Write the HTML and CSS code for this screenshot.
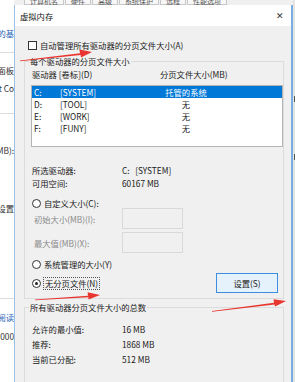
FILE: index.html
```html
<!DOCTYPE html>
<html lang="zh-CN">
<head>
    <meta charset="UTF-8">
    <title>虚拟内存</title>
    <link rel="stylesheet" href="styles.css">
</head>
<body>
<div class="page">

    <div class="behind">
        <div class="peek blue" style="margin-top: 28px;">内容的基</div>
        <div class="hr" style="margin-top: 14px;"></div>
        <div class="peek" style="margin-top: 12px;">面板</div>
        <div class="peek" style="margin-top: 8px;">Not Co</div>
        <div class="hr" style="margin-top: 20px;"></div>
        <div class="peek" style="margin-top: 31px;">(MB):</div>
        <div class="peek" style="margin-top: 48px;">级设置</div>
        <div class="hr" style="margin-top: 85px;"></div>
        <div class="peek blue" style="margin-top: 13px;">阅读</div>
        <div class="peek" style="margin-top: 9px;">0000</div>
    </div>

    <div class="middle">
        <div class="tabs">
            <span>计算机名</span><span>硬件</span><span>高级</span><span>系统保护</span><span>远程</span><span>性能选项</span>
        </div>

        <div class="dialog">
            <div class="titlebar">
                <span>虚拟内存</span>
                <span class="close">✕</span>
            </div>

            <div class="content">
                <label class="check-row">
                    <span class="checkbox"></span>
                    自动管理所有驱动器的分页文件大小(A)
                </label>

                <fieldset class="group">
                    <legend>每个驱动器的分页文件大小</legend>

                    <div class="list-head">
                        <span class="head-drive">驱动器 [卷标](D)</span>
                        <span>分页文件大小(MB)</span>
                    </div>

                    <div class="listbox">
                        <div class="list-row selected">
                            <span class="col-letter">C:</span>
                            <span class="col-label">[SYSTEM]</span>
                            <span class="col-size">托管的系统</span>
                        </div>
                        <div class="list-row">
                            <span class="col-letter">D:</span>
                            <span class="col-label">[TOOL]</span>
                            <span class="col-size">无</span>
                        </div>
                        <div class="list-row">
                            <span class="col-letter">E:</span>
                            <span class="col-label">[WORK]</span>
                            <span class="col-size">无</span>
                        </div>
                        <div class="list-row">
                            <span class="col-letter">F:</span>
                            <span class="col-label">[FUNY]</span>
                            <span class="col-size">无</span>
                        </div>
                    </div>

                    <div class="info">
                        <div class="info-row"><span class="info-key">所选驱动器:</span><span>C:&nbsp;&nbsp;&nbsp;[SYSTEM]</span></div>
                        <div class="info-row"><span class="info-key">可用空间:</span><span>60167 MB</span></div>
                    </div>

                    <div class="radio-row first">
                        <span class="radio"></span>自定义大小(C):
                    </div>
                    <div class="size-row">
                        <span class="size-key">初始大小(MB)(I):</span>
                        <span class="size-box"></span>
                    </div>
                    <div class="size-row second">
                        <span class="size-key">最大值(MB)(X):</span>
                        <span class="size-box"></span>
                    </div>
                    <div class="radio-row system">
                        <span class="radio"></span>系统管理的大小(Y)
                    </div>
                    <div class="last-row">
                        <div class="radio-row">
                            <span class="radio checked"></span><span class="focus">无分页文件(N)</span>
                        </div>
                        <button class="set-btn">设置(S)</button>
                    </div>
                </fieldset>

                <fieldset class="group total">
                    <legend>所有驱动器分页文件大小的总数</legend>
                    <div class="total-row"><span class="info-key">允许的最小值:</span><span>16 MB</span></div>
                    <div class="total-row"><span class="info-key">推荐:</span><span>1868 MB</span></div>
                    <div class="total-row"><span class="info-key">当前已分配:</span><span>512 MB</span></div>
                </fieldset>
            </div>
        </div>
    </div>

    <div class="edge">
        <span class="edge-mark" style="margin-top: 96px;"></span>
        <span class="edge-mark" style="margin-top: 52px;"></span>
    </div>

    <!-- red annotation arrows drawn over the screenshot -->
    <svg class="arrows" width="295" height="382" viewBox="0 0 295 382">
        <polygon fill="#e8352f" points="20,60.5 80,53.2 79.5,49.5 92,52 81,57.6 80.6,55 20,61.2"/>
        <polygon fill="#e8352f" points="35,299.5 88,295.8 87.6,292.3 100,295 88.6,299.4 88.3,297.2 35,300.2"/>
        <polygon fill="#e8352f" points="212,311 274,302.8 273.5,299.2 286,301 275,306.6 274.6,304.4 212,311.8"/>
    </svg>
</div>
</body>
</html>
```

FILE: styles.css
```css
body {
    margin: 0;
    font-family: "Noto Sans CJK SC", "Liberation Sans", sans-serif;
    font-size: 8.3px;
    color: #1a1a1a;
    background: #fff;
}

.page {
    position: relative;
    display: grid;
    grid-template-columns: 14px 279px 2px;
    width: 295px;
    height: 382px;
    overflow: hidden;
}

/* window behind the dialog */
.behind {
    display: flex;
    flex-direction: column;
    background: #fff;
    overflow: hidden;
}

.peek {
    display: flex;
    justify-content: flex-end;
    white-space: nowrap;
    line-height: 10px;
    height: 10px;
    color: #333;
}

.peek.blue {
    color: #2a62b8;
}

.hr {
    height: 1px;
    background: #dcdcdc;
}

.edge {
    display: flex;
    flex-direction: column;
    align-items: flex-end;
    background: #e4e4e4;
}

.edge-mark {
    width: 1px;
    height: 6px;
    background: #555;
}

.middle {
    display: flex;
    flex-direction: column;
    min-width: 0;
}

.tabs {
    height: 5px;
    display: flex;
    gap: 1px;
    background: #f0f0f0;
    overflow: hidden;
    padding-left: 10px;
}

.tabs span {
    border: 1px solid #c8c8c8;
    border-top: none;
    background: #f7f7f7;
    padding: 0 5px;
    line-height: 2px;
    font-size: 7px;
    color: #555;
    white-space: nowrap;
}

.dialog {
    flex: 1;
    display: flex;
    flex-direction: column;
    background: #f0f0f0;
    border-left: 1px solid #9cc0e6;
    border-right: 2px solid #7aaee2;
}

.titlebar {
    height: 21px;
    display: flex;
    align-items: center;
    justify-content: space-between;
    background: #fff;
    padding: 0 7px 0 5px;
    color: #111;
}

.close {
    font-size: 9px;
    color: #333;
}

.content {
    display: flex;
    flex-direction: column;
}

.check-row {
    display: flex;
    align-items: center;
    gap: 3px;
    height: 10px;
    margin-top: 14px;
    padding-left: 13px;
}

.checkbox {
    width: 7px;
    height: 7px;
    border: 1px solid #333;
    background: #fff;
}

.group {
    margin: 6px 7px 0 9px;
    padding: 0 0 5px 0;
    border: 1px solid #dcdcdc;
    min-width: 0;
    width: 260px;
    box-sizing: border-box;
}

.group legend {
    margin-left: 4px;
    padding: 0 1px;
    line-height: 10px;
}

.list-head {
    display: flex;
    height: 10px;
    line-height: 10px;
    margin-top: 3px;
    padding-left: 7px;
}

.head-drive {
    width: 128px;
}

.listbox {
    margin: 6px 0 0 6px;
    height: 62px;
    box-sizing: border-box;
    border: 1px solid #b5b5b5;
    background: #fff;
}

.list-row {
    display: flex;
    height: 12px;
    line-height: 12px;
    padding-left: 2px;
}

.list-row.selected {
    background: #0078d7;
    color: #fff;
}

.col-letter {
    width: 26px;
}

.col-label {
    width: 80px;
}

.col-size {
    width: 92px;
    text-align: center;
}

.info {
    margin-top: 17px;
    padding-left: 7px;
}

.info-row {
    display: flex;
    height: 13px;
    line-height: 13px;
}

.info-key {
    width: 90px;
}

.radio-row {
    display: flex;
    align-items: center;
    gap: 3px;
    height: 10px;
    padding-left: 7px;
}

.radio-row.first {
    margin-top: 8px;
}

.radio-row.system {
    margin-top: 6px;
}

.radio {
    width: 7px;
    height: 7px;
    border: 1px solid #333;
    border-radius: 50%;
    background: #fff;
    position: relative;
}

.radio.checked::after {
    content: "";
    position: absolute;
    left: 2px;
    top: 2px;
    width: 3px;
    height: 3px;
    border-radius: 50%;
    background: #222;
}

.focus {
    outline: 1px dotted #555;
    padding: 0 1px;
    line-height: 11px;
}

.size-row {
    display: flex;
    align-items: center;
    height: 21px;
    padding-left: 9px;
    color: #8a8a8a;
}

.size-row.second {
    margin-top: 3px;
}

.size-key {
    width: 88px;
}

.size-box {
    width: 61px;
    height: 21px;
    box-sizing: border-box;
    border: 1px solid #d9d9d9;
    background: #f0f0f0;
}

.last-row {
    display: flex;
    align-items: center;
    justify-content: space-between;
    margin-top: 4px;
    padding-right: 5px;
}

.set-btn {
    width: 62px;
    height: 20px;
    box-sizing: border-box;
    border: 1px solid #3d8ee0;
    background: #e5f1fb;
    font-family: inherit;
    font-size: 8.3px;
    color: #1a1a1a;
    padding: 0;
}

.group.total {
    margin-top: 3px;
    padding-bottom: 20px;
}

.total-row {
    display: flex;
    height: 15px;
    line-height: 15px;
    padding-left: 7px;
}

.total-row:first-of-type {
    margin-top: 10px;
}

.arrows {
    position: absolute;
    left: 0;
    top: 0;
    pointer-events: none;
}
```
